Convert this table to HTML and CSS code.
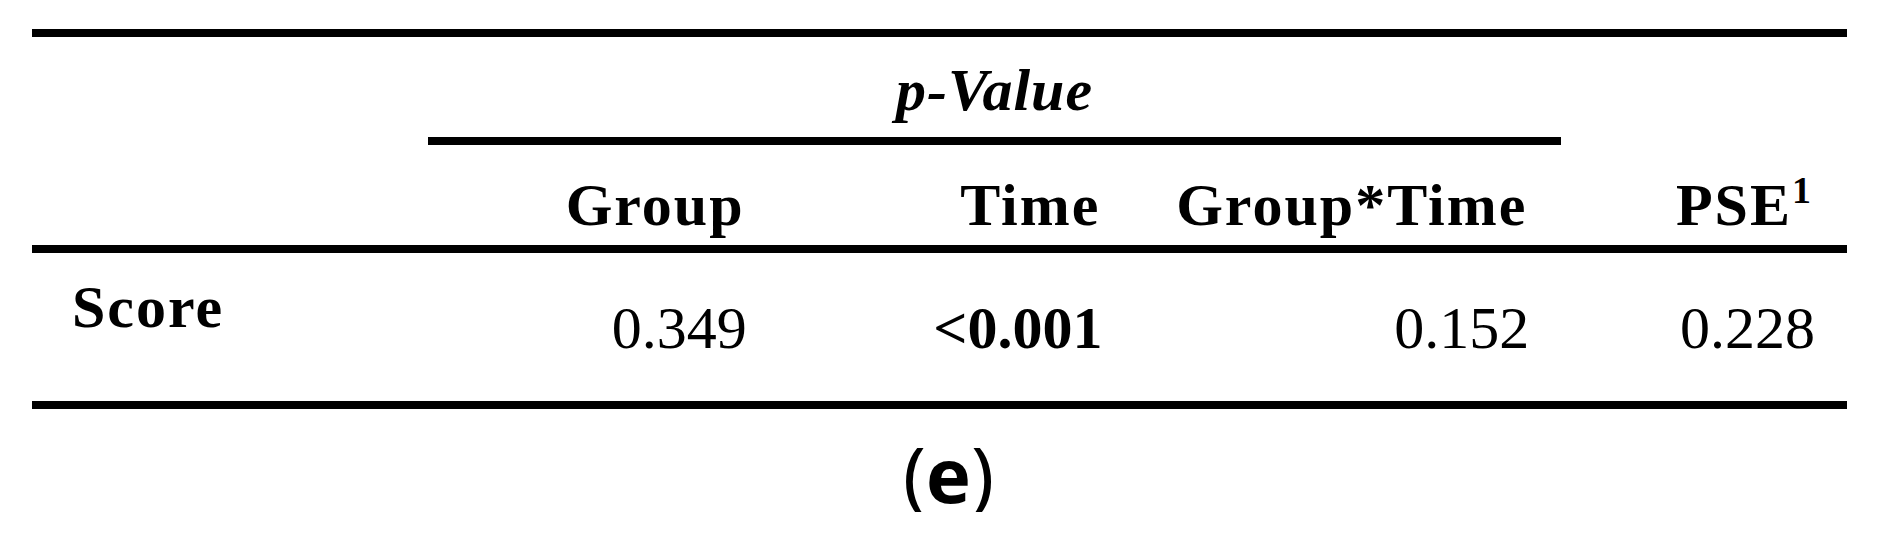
FILE: index.html
```html
<!DOCTYPE html>
<html lang="en">
<head>
    <meta charset="UTF-8">
    <meta name="viewport" content="width=device-width, initial-scale=1.0">
    <title>p-Value table (e)</title>
    <link rel="stylesheet" href="styles.css">
</head>
<body>
    <div class="figure">
        <table class="stats">
            <tr>
                <th class="label-col" rowspan="2"></th>
                <th class="span-head" colspan="3"><i>p-Value</i></th>
                <th class="col-head side" rowspan="2">PSE<sup>1</sup></th>
            </tr>
            <tr>
                <th class="col-head c-group">Group</th>
                <th class="col-head c-time">Time</th>
                <th class="col-head c-inter">Group*Time</th>
            </tr>
            <tr>
                <td class="row-label">Score</td>
                <td class="num">0.349</td>
                <td class="num"><strong>&lt;0.001</strong></td>
                <td class="num">0.152</td>
                <td class="num">0.228</td>
            </tr>
        </table>
        <p class="caption">(<b>e</b>)</p>
    </div>
</body>
</html>
```

FILE: styles.css
```css
body {
    margin: 0;
    background: #fff;
    color: #000;
    font-family: 'Liberation Serif', 'Times New Roman', serif;
}
.figure {
    padding: 29px 0 0 32px;
}
.stats {
    width: 1815px;
    border-collapse: separate;
    border-spacing: 0;
    border-top: 8px solid #000;
    border-bottom: 8px solid #000;
    font-size: 60px;
    line-height: 60px;
}
.stats th,
.stats td {
    padding: 0 34px 0 36px;
    text-align: right;
    white-space: nowrap;
}
.stats th {
    font-weight: bold;
    letter-spacing: 2px;
}
.label-col {
    width: 325px;
    border-bottom: 8px solid #000;
}
.span-head {
    text-align: center !important;
    padding: 23px 0 17px 0 !important;
    border-bottom: 8px solid #000;
    letter-spacing: 1px !important;
}
.col-head {
    padding-top: 30px !important;
    padding-bottom: 10px !important;
    border-bottom: 8px solid #000;
    vertical-align: bottom;
}
.c-group { width: 280px; }
.c-time { width: 285px; }
.c-inter { width: 356px; }
.side { width: 215px; }
sup {
    font-size: 38px;
    line-height: 0;
    vertical-align: 22px;
}
.row-label {
    text-align: left !important;
    font-weight: bold;
    letter-spacing: 2px;
    padding: 24px 0 64px 40px !important;
    vertical-align: top;
}
.num {
    vertical-align: top;
    padding-top: 45px !important;
    padding-bottom: 43px !important;
    padding-right: 32px !important;
}
.caption {
    margin: 27px 0 0 0;
    width: 1815px;
    padding-left: 9px;
    text-align: center;
    font-family: 'Noto Sans', 'Open Sans', sans-serif;
    font-size: 76px;
    line-height: 76px;
}
```
